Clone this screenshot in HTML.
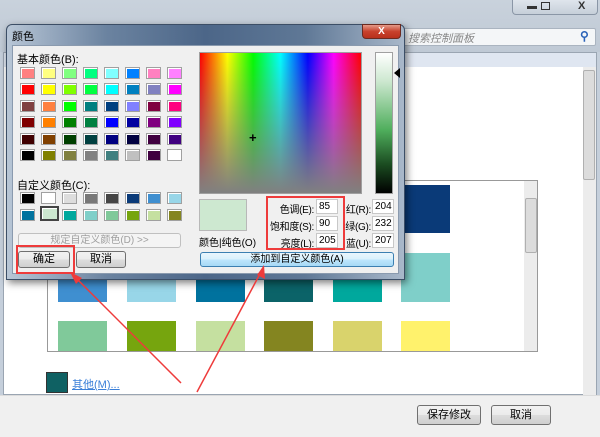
<!DOCTYPE html>
<html><head><meta charset="utf-8"><style>
*{margin:0;padding:0;box-sizing:border-box}
body{width:600px;height:437px;overflow:hidden;position:relative;background:#c5cfdb;font-family:"Liberation Sans","Noto Sans CJK SC",sans-serif;font-size:11px;color:#000}
.a{position:absolute}
.sw{position:absolute;width:15px;height:12px;border:1px solid #a0a0a0;box-shadow:inset 1px 1px 0 #fff}
.btn{position:absolute;border:1px solid #707070;border-radius:3px;background:linear-gradient(#f2f2f2,#ebebeb 50%,#dddddd 51%,#cfcfcf);text-align:center;font-size:11px}
.inp{position:absolute;width:22px;height:15px;background:#fff;border:1px solid #c8c8c8;font-size:10px;line-height:13px;padding-left:2px}
.lbl{position:absolute;font-size:10px;text-align:right;letter-spacing:-0.3px}
.big{position:absolute;width:49px}
</style></head><body>
<div class="a" style="left:0;top:0;width:600px;height:52px;background:linear-gradient(#c9d2dc,#bfc9d5)"></div>
<div class="a" style="left:512px;top:0;width:86px;height:15px;border:1px solid #8a96a6;border-top:none;border-radius:0 0 4px 4px;background:linear-gradient(#dfe5ec,#c6cfd9)"></div>
<div class="a" style="left:527px;top:1px;font-size:10px;color:#333">▬</div>
<div class="a" style="left:541px;top:2px;width:9px;height:8px;border:1px solid #333"></div>
<div class="a" style="left:578px;top:0px;font-size:11px;color:#333;font-weight:bold">X</div>
<div class="a" style="left:400px;top:28px;width:196px;height:18px;background:#f4f6f8;border:1px solid #aab4c0;border-radius:2px"></div>
<div class="a" style="left:408px;top:30px;font-size:11px;color:#888;font-style:italic">搜索控制面板</div>
<div class="a" style="left:580px;top:29px;color:#2a62b8;font-size:12px;font-weight:bold">⚲</div>
<div class="a" style="left:3px;top:52px;width:594px;height:343px;background:#fff;border:1px solid #9aa5b2"></div>
<div class="a" style="left:4px;top:53px;width:592px;height:14px;background:#dfe6f1"></div>
<div class="a" style="left:583px;top:67px;width:13px;height:328px;background:#ececec"></div>
<div class="a" style="left:583px;top:70px;width:12px;height:110px;background:#dcdcdc;border:1px solid #b0b0b0;border-radius:2px"></div>
<div class="a" style="left:0;top:395px;width:600px;height:42px;background:#f0f0f0;border-top:1px solid #dcdcdc"></div>
<div class="btn" style="left:417px;top:405px;width:64px;height:20px;line-height:18px">保存修改</div>
<div class="btn" style="left:491px;top:405px;width:60px;height:20px;line-height:18px">取消</div>
<div class="a" style="left:47px;top:180px;width:491px;height:172px;border:1px solid #999;background:#fff;overflow:hidden">
 <div class="big" style="left:353px;top:4px;height:48px;background:#0a3a78"></div>
 <div class="big" style="left:10px;top:72px;height:49px;background:#3f8fd0"></div>
 <div class="big" style="left:79px;top:72px;height:49px;background:#98d6e8"></div>
 <div class="big" style="left:148px;top:72px;height:49px;background:#00729e"></div>
 <div class="big" style="left:216px;top:72px;height:49px;background:#0b6368"></div>
 <div class="big" style="left:285px;top:72px;height:49px;background:#00a89d"></div>
 <div class="big" style="left:353px;top:72px;height:49px;background:#7fcfc9"></div>
 <div class="big" style="left:10px;top:140px;height:40px;background:#80c99a"></div>
 <div class="big" style="left:79px;top:140px;height:40px;background:#76a50e"></div>
 <div class="big" style="left:148px;top:140px;height:40px;background:#c5e0a0"></div>
 <div class="big" style="left:216px;top:140px;height:40px;background:#848520"></div>
 <div class="big" style="left:285px;top:140px;height:40px;background:#d9d36c"></div>
 <div class="big" style="left:353px;top:140px;height:40px;background:#fff26c"></div>
 <div class="a" style="left:476px;top:0;width:14px;height:170px;background:#ececec"></div>
 <div class="a" style="left:477px;top:17px;width:12px;height:55px;background:#dcdcdc;border:1px solid #b0b0b0;border-radius:2px"></div>
</div>
<div class="a" style="left:46px;top:372px;width:22px;height:21px;background:#0f6163;border:1px solid #333"></div>
<div class="a" style="left:72px;top:376px;color:#3a7fd8;text-decoration:underline;font-size:11px">其他(M)...</div>
<div class="a" style="left:6px;top:24px;width:399px;height:256px;border:1px solid #3c4e66;border-radius:6px 6px 0 0;background:linear-gradient(90deg,#b8c6d6,#6b83a0 25%,#4c6688 50%,#5f7896 75%,#a9b8ca);box-shadow:2px 3px 8px rgba(0,0,0,.5)"></div>
<div class="a" style="left:12px;top:28px;font-size:11px">颜色</div>
<div class="a" style="left:362px;top:24px;width:39px;height:15px;border:1px solid #6b2a20;border-radius:0 0 4px 4px;background:linear-gradient(#e49a88,#c8412c 50%,#b8301c);color:#fff;font-weight:bold;text-align:center;font-size:10px;line-height:13px">X</div>
<div class="a" style="left:12px;top:45px;width:387px;height:229px;background:#f0f0f0;border:1px solid #8a9aae"></div>
<div class="a" style="left:17px;top:51px">基本颜色(B):</div>
<div id="basic"></div>
<div class="a" style="left:17px;top:177px">自定义颜色(C):</div>
<div class="btn" style="left:18px;top:233px;width:163px;height:15px;line-height:13px;color:#a0a0a0;border-color:#c0c0c0;background:#f4f4f4;font-size:10px">规定自定义颜色(D) &gt;&gt;</div>
<div class="btn" style="left:18px;top:251px;width:52px;height:17px;line-height:15px">确定</div>
<div class="btn" style="left:76px;top:251px;width:50px;height:17px;line-height:15px">取消</div>
<div class="a" style="left:16px;top:245px;width:59px;height:29px;border:2px solid #ee3b3b"></div>
<div class="a" style="left:199px;top:52px;width:163px;height:142px;border:1px solid #a0a0a0;background:linear-gradient(rgba(128,128,128,0),#808080),linear-gradient(90deg,#f00,#ff0 17%,#0f0 33%,#0ff 50%,#00f 67%,#f0f 83%,#f00)"></div>
<div class="a" style="left:249px;top:131px;font-size:13px;font-weight:bold;line-height:13px">+</div>
<div class="a" style="left:375px;top:52px;width:18px;height:142px;border:1px solid #a0a0a0;background:linear-gradient(#fff,#cde8d0 20%,#4fae5c 55%,#1a4a20 80%,#000)"></div>
<div class="a" style="left:394px;top:68px;width:0;height:0;border-top:5px solid transparent;border-bottom:5px solid transparent;border-right:6px solid #000"></div>
<div class="a" style="left:199px;top:199px;width:48px;height:32px;background:#cde8d0;border:1px solid #b8b8b8"></div>
<div class="a" style="left:199px;top:234px;font-size:10px">颜色|纯色(O)</div>
<div class="lbl" style="left:250px;top:201px;width:64px">色调(E):</div>
<div class="lbl" style="left:250px;top:218px;width:64px">饱和度(S):</div>
<div class="lbl" style="left:250px;top:235px;width:64px">亮度(L):</div>
<div class="inp" style="left:316px;top:199px">85</div>
<div class="inp" style="left:316px;top:216px">90</div>
<div class="inp" style="left:316px;top:233px">205</div>
<div class="lbl" style="left:340px;top:201px;width:31px">红(R):</div>
<div class="lbl" style="left:340px;top:218px;width:31px">绿(G):</div>
<div class="lbl" style="left:340px;top:235px;width:31px">蓝(U):</div>
<div class="inp" style="left:372px;top:199px">204</div>
<div class="inp" style="left:372px;top:216px">232</div>
<div class="inp" style="left:372px;top:233px">207</div>
<div class="a" style="left:266px;top:196px;width:79px;height:54px;border:2px solid #ee3b3b"></div>
<div class="btn" style="left:200px;top:252px;width:194px;height:15px;line-height:13px;border-color:#3c7fb1;background:linear-gradient(#eaf6fd,#d9f0fc 50%,#bee6fd 51%,#a7d9f5);font-size:10px">添加到自定义颜色(A)</div>
<svg class="a" style="left:0;top:0" width="600" height="437">
<g stroke="#ee3b3b" stroke-width="1.5" fill="#ee3b3b">
<line x1="181" y1="383" x2="74" y2="276"/>
<polygon points="70,272 82,278 76,284" stroke="none"/>
<line x1="197" y1="392" x2="262" y2="270"/>
<polygon points="264,265 265,279 257,275" stroke="none"/>
</g></svg>
<script>
var b=[["#ff8080","#ffff80","#80ff80","#00ff80","#80ffff","#0080ff","#ff80c0","#ff80ff"],
["#ff0000","#ffff00","#80ff00","#00ff40","#00ffff","#0080c0","#8080c0","#ff00ff"],
["#804040","#ff8040","#00ff00","#008080","#004080","#8080ff","#800040","#ff0080"],
["#800000","#ff8000","#008000","#008040","#0000ff","#0000a0","#800080","#8000ff"],
["#400000","#804000","#004000","#004040","#000080","#000040","#400040","#400080"],
["#000000","#808000","#808040","#808080","#408080","#c0c0c0","#400040","#ffffff"]];
var c=[["#000000","#ffffff","#dddddd","#787878","#454545","#0a3a78","#3f8fd0","#98d6e8"],
["#00729e","#cde8d0","#00a89d","#7fcfc9","#80c99a","#76a50e","#c5e0a0","#848520"]];
var h="";
for(var r=0;r<6;r++)for(var k=0;k<8;k++)h+='<div class="sw" style="left:'+(20+k*21)+'px;top:'+(67+r*16.4)+'px;background:'+b[r][k]+'"></div>';
for(var r=0;r<2;r++)for(var k=0;k<8;k++){var s=(r==1&&k==1)?';border:2px solid #444;left:'+(40)+'px;top:'+(206)+'px;width:19px;height:15px':'';
h+='<div class="sw" style="left:'+(20+k*21)+'px;top:'+(192+r*17)+'px;background:'+c[r][k]+s+'"></div>';}
document.getElementById("basic").innerHTML=h;
</script>
</body></html>
